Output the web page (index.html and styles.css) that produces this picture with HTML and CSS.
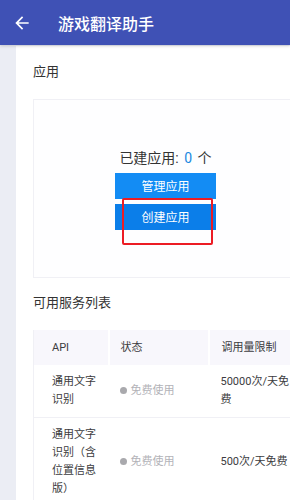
FILE: index.html
```html
<!DOCTYPE html>
<html lang="zh-CN">
<head>
    <meta charset="UTF-8">
    <meta name="viewport" content="width=device-width, initial-scale=1.0">
    <title>游戏翻译助手</title>
    <link rel="stylesheet" href="styles.css">
</head>
<body>
    <!-- Top bar -->
    <header class="app-bar">
        <svg class="back-icon" viewBox="0 0 24 24" width="20" height="20">
            <path d="M20 11H7.83l5.59-5.59L12 4l-8 8 8 8 1.41-1.41L7.83 13H20v-2z" fill="#ffffff"/>
        </svg>
        <h1 class="app-title">游戏翻译助手</h1>
    </header>

    <div class="page">
        <main class="panel">
            <h2 class="section-title">应用</h2>

            <div class="app-box">
                <p class="app-count">已建应用: <span class="count-num">0</span> 个</p>
                <button class="btn btn-manage">管理应用</button>
                <button class="btn btn-create">创建应用</button>
                <div class="highlight"></div>
            </div>

            <h2 class="section-title section-gap">可用服务列表</h2>

            <table class="service-table">
                <thead>
                    <tr>
                        <th class="col-api">API</th>
                        <th class="col-status">状态</th>
                        <th class="col-limit">调用量限制</th>
                    </tr>
                </thead>
                <tbody>
                    <tr>
                        <td class="col-api">通用文字识别</td>
                        <td class="col-status"><span class="dot"></span>免费使用</td>
                        <td class="col-limit">50000次/天免费</td>
                    </tr>
                    <tr>
                        <td class="col-api">通用文字识别（含位置信息版）</td>
                        <td class="col-status"><span class="dot"></span>免费使用</td>
                        <td class="col-limit">500次/天免费</td>
                    </tr>
                </tbody>
            </table>
        </main>
    </div>
</body>
</html>
```

FILE: styles.css
```css
:root {
    --bar-bg: #3f51b5;
    --page-bg: #ebedf4;
    --text-color: #333333;
    --cell-color: #3c3c40;
    --muted-color: #b3b3b8;
    --line-color: #f0f0f5;
    --head-bg: #f8f7fc;
    --btn-light: #138cf4;
    --btn-dark: #0b7ee9;
    --link-blue: #1a88e0;
}

body {
    margin: 0;
    font-family: Roboto, "Noto Sans CJK SC", sans-serif;
    color: var(--text-color);
    background-color: var(--page-bg);
    overflow: hidden;
}

/* App bar */
.app-bar {
    position: relative;
    z-index: 1;
    height: 45px;
    display: flex;
    align-items: center;
    background-color: var(--bar-bg);
    box-shadow: 0 1px 3px rgba(0, 0, 0, 0.18);
}

.back-icon {
    margin-left: 12px;
    flex-shrink: 0;
}

.app-title {
    margin: 0 0 0 26px;
    font-size: 16px;
    font-weight: 500;
    color: #ffffff;
}

/* Content */
.page {
    display: flex;
    padding-left: 16px;
    margin-top: 1px;
}

.panel {
    flex-shrink: 0;
    width: 265px;
    padding: 16px 17px 0;
    background-color: #ffffff;
}

.section-title {
    margin: 0;
    font-size: 13px;
    font-weight: 400;
    line-height: 20px;
}

.section-gap {
    margin-top: 15px;
}

.app-box {
    position: relative;
    margin-top: 17px;
    height: 177px;
    border: 1px solid var(--line-color);
    display: flex;
    flex-direction: column;
    align-items: center;
    justify-content: center;
    background-color: #fefeff;
}

.app-count {
    margin: 0 0 5px;
    font-size: 14px;
    line-height: 20px;
}

.count-num {
    color: var(--link-blue);
    margin: 0 2px;
}

.btn {
    width: 101px;
    height: 26px;
    border: none;
    padding: 0;
    font-family: inherit;
    font-size: 12px;
    color: #ffffff;
}

.btn-manage {
    background-color: var(--btn-light);
}

.btn-create {
    margin-top: 5px;
    background-color: var(--btn-dark);
}

/* red annotation frame */
.highlight {
    position: absolute;
    left: 88px;
    top: 98px;
    width: 87px;
    height: 43px;
    border: 2px solid #ec1c24;
    border-radius: 2px;
}

/* Service table */
.service-table {
    margin-top: 17px;
    width: 265px;
    table-layout: fixed;
    border-collapse: collapse;
    border-left: 1px solid var(--line-color);
    font-size: 11px;
    line-height: 18px;
    color: var(--cell-color);
}

.service-table th,
.service-table td {
    box-sizing: border-box;
}

.service-table th {
    height: 35px;
    padding: 0 12px;
    text-align: left;
    font-weight: 400;
    background-color: var(--head-bg);
    border-right: 2px solid #ffffff;
}

.service-table td {
    padding: 8px 12px;
    vertical-align: middle;
    border-bottom: 1px solid var(--line-color);
}

.service-table .col-api {
    width: 75px;
    padding-left: 18px;
    padding-right: 8px;
}

.service-table .col-status {
    width: 100px;
    padding-left: 11px;
}

.service-table .col-limit {
    padding-right: 2px;
}

.service-table td.col-status {
    color: var(--muted-color);
    white-space: nowrap;
}

.dot {
    display: inline-block;
    width: 7px;
    height: 7px;
    margin-right: 4px;
    border-radius: 50%;
    background-color: #a9a9ad;
    vertical-align: 0;
}
```
